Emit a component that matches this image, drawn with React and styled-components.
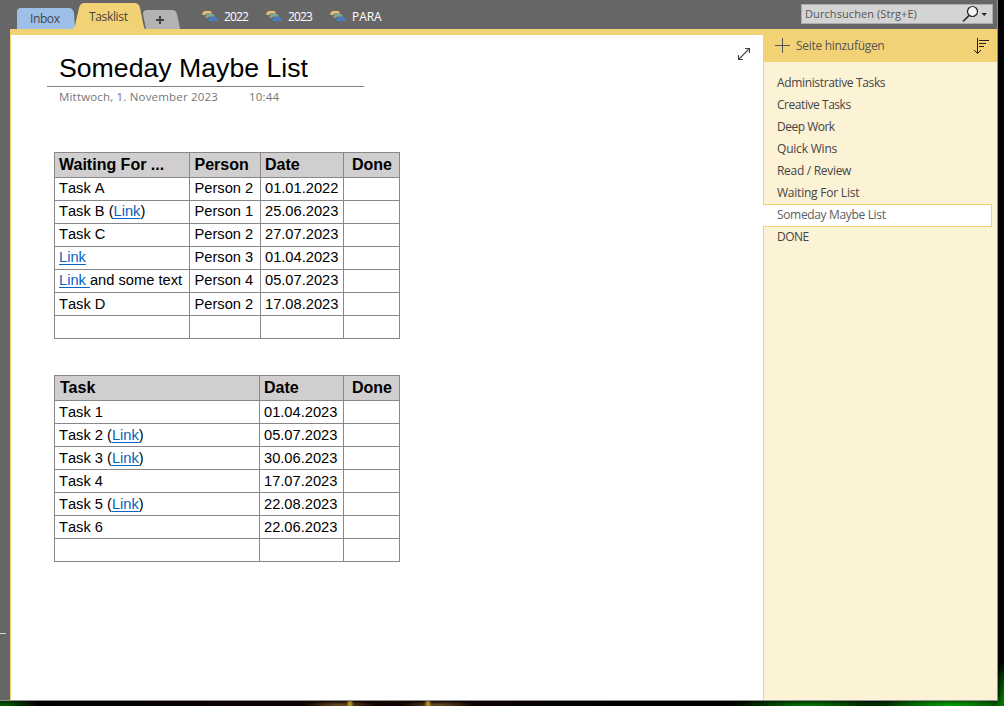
import React from "react";
import styled, { createGlobalStyle } from "styled-components";

const Global = createGlobalStyle`
  *{box-sizing:border-box}
  html,body{margin:0;padding:0;background:#000}
  body{width:1004px;height:706px;overflow:hidden;font-family:"Open Sans","Noto Sans",sans-serif}
`;
const Desktop = styled.div`
  width:1004px;height:706px;padding:0 6px 5px 0;
  background:
    radial-gradient(ellipse 4px 8px at 350px 704px,#c9a02c,transparent),
    radial-gradient(ellipse 4px 8px at 428px 704px,#c9a02c,transparent),
    radial-gradient(ellipse 36px 4px at 340px 705px,#6a5020,transparent),
    radial-gradient(ellipse 36px 4px at 438px 705px,#6a5020,transparent),
    radial-gradient(ellipse 40px 10px at 0 706px,#006400,transparent),
    radial-gradient(ellipse 90px 12px at 950px 706px,#00a800,transparent),
    radial-gradient(ellipse 80px 9px at 810px 706px,#007e00,transparent),
    radial-gradient(ellipse 9px 36px at 1004px 696px,#007a00,transparent),
    linear-gradient(90deg,#000,#140404 40%,#000 62%);
`;
const Window = styled.div`
  width:998px;height:701px;background:#666;border-right:1px solid #8f8f8f;border-bottom:1px solid #8f8f8f;
  display:flex;flex-direction:column;
`;
const TopBar = styled.header`
  height:29px;flex:none;display:flex;padding-left:16px;align-items:flex-end;
`;
const Label = styled.span`
  display:block;
  font-size:${p => p.$size || 12}px;letter-spacing:${p => p.$ls || 0}px;color:${p => p.$color || "#444"};
  line-height:16px;white-space:pre;
`;
const Tab = styled.div`
  position:relative;width:${p => p.$w}px;height:${p => p.$h}px;margin-right:${p => p.$gap || 0}px;
  padding:${p => p.$pad};z-index:${p => (p.$active ? 2 : 1)};display:flex;
`;
const TabShape = styled.svg`position:absolute;inset:0;z-index:-1;`;
const Notebooks = styled.nav`display:flex;margin-left:21px;height:29px;padding-top:9px;`;
const Notebook = styled.div`
  width:64px;display:flex;gap:5px;
  svg{margin-top:2px;flex:none}
`;
const Search = styled.div`
  margin:0 4px 5px auto;width:192px;height:20px;background:#d4d4d4;border:1px solid #ababab;
  display:flex;align-items:center;justify-content:space-between;padding-left:3px;
`;
const Body = styled.div`flex:1;display:flex;`;
const Gutter = styled.div`width:10px;padding-top:604px;`;
const Tick = styled.div`width:6px;height:1px;background:#d8d8d8;`;
const Page = styled.main`
  width:753px;background:#fff;border-left:1px solid #f3d275;border-top:6px solid #f3d275;position:relative;
  padding:18px 0 0 36px;
`;
const Title = styled.h1`
  margin:0;width:317px;height:34px;border-bottom:1px solid #808080;padding-left:12px;
  font:400 26.67px/31px "Liberation Sans",Arial,sans-serif;color:#000;white-space:nowrap;
`;
const Meta = styled.div`display:flex;padding:2px 0 0 12px;height:65px;`;
const DateSlot = styled.div`width:190px;`;
const Expand = styled.svg`position:absolute;left:726px;top:12px;`;
const Table = styled.div`
  display:grid;width:346px;grid-template-columns:${p => p.$cols};grid-auto-rows:23px;grid-template-rows:25px;
  margin:0 0 36px 7px;border-left:1px solid #888;border-top:1px solid #888;
`;
const Cell = styled.div`
  border-right:1px solid #888;border-bottom:1px solid #888;padding-left:${p => p.$pl || 4}px;white-space:pre;color:#000;
  font:400 14.67px/${p => (p.$low ? 22 : 20)}px "Liberation Sans",Arial,sans-serif;font-kerning:none;
`;
const Head = styled(Cell)`
  background:#d0cece;font-weight:700;font-size:16px;line-height:23px;font-kerning:auto;
`;
const Link = styled.a`color:#0563c1;text-decoration:underline;text-underline-offset:2px;text-decoration-thickness:1px;`;
const Sidebar = styled.aside`width:234px;display:flex;flex-direction:column;background:#fcf2d6;`;
const SideHead = styled.div`
  height:33px;background:#f3d275;display:flex;align-items:center;padding:0 7px 0 12px;gap:5px;
  svg:last-child{margin:1px 0 0 auto}
`;
const Pages = styled.div`flex:1;border-left:1px solid #f3d275;padding-top:10px;`;
const PageItem = styled.div`
  height:22px;padding:3px 0 0 13px;
  ${p => p.$on && `background:#fff;border:1px solid #f3d275;border-left:0;width:229px;height:23px;margin:0 0 -1px -1px;padding:2px 0 0 14px;`}
`;

const NotebookIcon = () => (
  <svg width="17" height="11" viewBox="0 0 17 11">
    <path d="M0 3L1.500 .8Q2 0 3 0H8Q9.500 0 10 2.500H4.500Q3.500 2.500 3 4H1.500Q0 4 0 3Z" fill="#edc077" />
    <path d="M3 6L4.500 3.800Q5 3 6 3H11Q12.500 3 13 5.500H7.500Q6.500 5.500 6 7H4.500Q3 7 3 6Z" fill="#76a797" />
    <path d="M6.200 9L8 6.800Q8.500 6 9.500 6H13.500Q14.700 6 15 7L16.200 10H7Q6 10 6.200 9Z" fill="#477fbe" />
  </svg>
);
const lk = t => <Link key={t}>{t}</Link>;
const waiting = [
  ["Task A", "Person 2", "01.01.2022"],
  [["Task B (", lk("Link"), ")"], "Person 1", "25.06.2023"],
  ["Task C", "Person 2", "27.07.2023"],
  [lk("Link"), "Person 3", "01.04.2023"],
  [[lk("Link "), "and some text"], "Person 4", "05.07.2023"],
  ["Task D", "Person 2", "17.08.2023"],
  ["", "", ""],
];
const tasks = [
  ["Task 1", "01.04.2023"],
  [["Task 2 (", lk("Link"), ")"], "05.07.2023"],
  [["Task 3 (", lk("Link"), ")"], "30.06.2023"],
  ["Task 4", "17.07.2023"],
  [["Task 5 (", lk("Link"), ")"], "22.08.2023"],
  ["Task 6", "22.06.2023"],
  ["", ""],
];
const pages = [
  ["Administrative Tasks", -0.35], ["Creative Tasks", -0.45], ["Deep Work", -0.5], ["Quick Wins", -0.2],
  ["Read / Review", -0.3], ["Waiting For List", -0.22], ["Someday Maybe List", -0.34], ["DONE", -0.5],
];
const Rows = ({ rows, lowFrom }) => rows.map((r, i) => [...r, ""].map((c, j) => (
  <Cell key={i + "-" + j} $low={i >= lowFrom} $pl={j === 1 && r.length === 3 ? 4.5 : 4}>{c}</Cell>
)));

export default function App() {
  return (
    <Desktop>
      <Global />
      <Window>
        <TopBar>
          <Tab $w={59} $h={21} $pad="3px 0 0 14px" $gap={-2}>
            <TabShape width="59" height="21"><path d="M1 21V4Q1 0 5 0H53Q57 0 58 5L59 21Z" fill="#9cc0e8" /></TabShape>
            <Label $ls={-0.4}>Inbox</Label>
          </Tab>
          <Tab $active $w={72} $h={26} $pad="6px 0 0 16px" $gap={-4}>
            <TabShape width="72" height="26"><path d="M0 26Q2 24 3 18L6 5Q7 0 12 0H61Q66 0 67 5L70 20Q71 25 72 26Z" fill="#f3d275" /></TabShape>
            <Label $ls={-0.35}>Tasklist</Label>
          </Tab>
          <Tab $w={40} $h={19} $pad="0">
            <TabShape width="40" height="19"><path d="M2 4Q2 0 6 0H31Q35 0 36 4L39 19H5Z" fill="#b3b3b3" /><path d="M15 10H23M19 6V14" stroke="#444" strokeWidth="2" /></TabShape>
          </Tab>
          <Notebooks>
            {["2022", "2023", "PARA"].map(n => (
              <Notebook key={n}><NotebookIcon /><Label $color="#fff" $ls={n === "PARA" ? -0.05 : -0.9}>{n}</Label></Notebook>
            ))}
          </Notebooks>
          <Search>
            <Label $size={11} $ls={0.08} $color="#555">Durchsuchen (Strg+E)</Label>
            <svg width="31" height="18" viewBox="0 0 31 18">
              <circle cx="11.500" cy="6.500" r="5" fill="#f2f6f6" stroke="#222" strokeWidth="1.200" />
              <path d="M8 10.500L2 16.500" stroke="#222" strokeWidth="1.600" />
              <path d="M20.500 8H26L23.200 11Z" fill="#222" />
            </svg>
          </Search>
        </TopBar>
        <Body>
          <Gutter><Tick /></Gutter>
          <Page>
            <Expand width="14" height="14" viewBox="0 0 14 14" fill="none" stroke="#444" strokeWidth="1.100"><path d="M1.500 12.500L12.500 1.500M8 1.500H12.500V6M1.500 8V12.500H6" /></Expand>
            <Title>Someday Maybe List</Title>
            <Meta>
              <DateSlot><Label $size={11.5} $ls={0.18} $color="#767676">Mittwoch, 1. November 2023</Label></DateSlot>
              <Label $size={11.5} $ls={0.2} $color="#767676">10:44</Label>
            </Meta>
            <Table $cols="135px 71px 83px 56px">
              <Head>Waiting For ...</Head><Head $pl={4.5}>Person</Head><Head>Date</Head><Head $pl={8}>Done</Head>
              <Rows rows={waiting} lowFrom={5} />
            </Table>
            <Table $cols="205px 84px 56px">
              <Head $pl={5}>Task</Head><Head>Date</Head><Head $pl={8}>Done</Head>
              <Rows rows={tasks} lowFrom={0} />
            </Table>
          </Page>
          <Sidebar>
            <SideHead>
              <svg width="16" height="16" viewBox="0 0 16 16" stroke="#555"><path d="M0 7.500H15M7.500 0V15" /></svg>
              <Label $color="#555" $ls={-0.3}>Seite hinzufügen</Label>
              <svg width="17" height="17" viewBox="0 0 17 17" fill="none" stroke="#222"><path d="M4.500 0V15M1 12L4.500 15.500L8 12M6 2.500H16M6 5.500H13M6 8.500H11" /></svg>
            </SideHead>
            <Pages>
              {pages.map(([t, ls]) => {
                const on = t === "Someday Maybe List";
                return <PageItem key={t} $on={on}><Label $ls={ls} $color={on ? "#606060" : "#444"}>{t}</Label></PageItem>;
              })}
            </Pages>
          </Sidebar>
        </Body>
      </Window>
    </Desktop>
  );
}
